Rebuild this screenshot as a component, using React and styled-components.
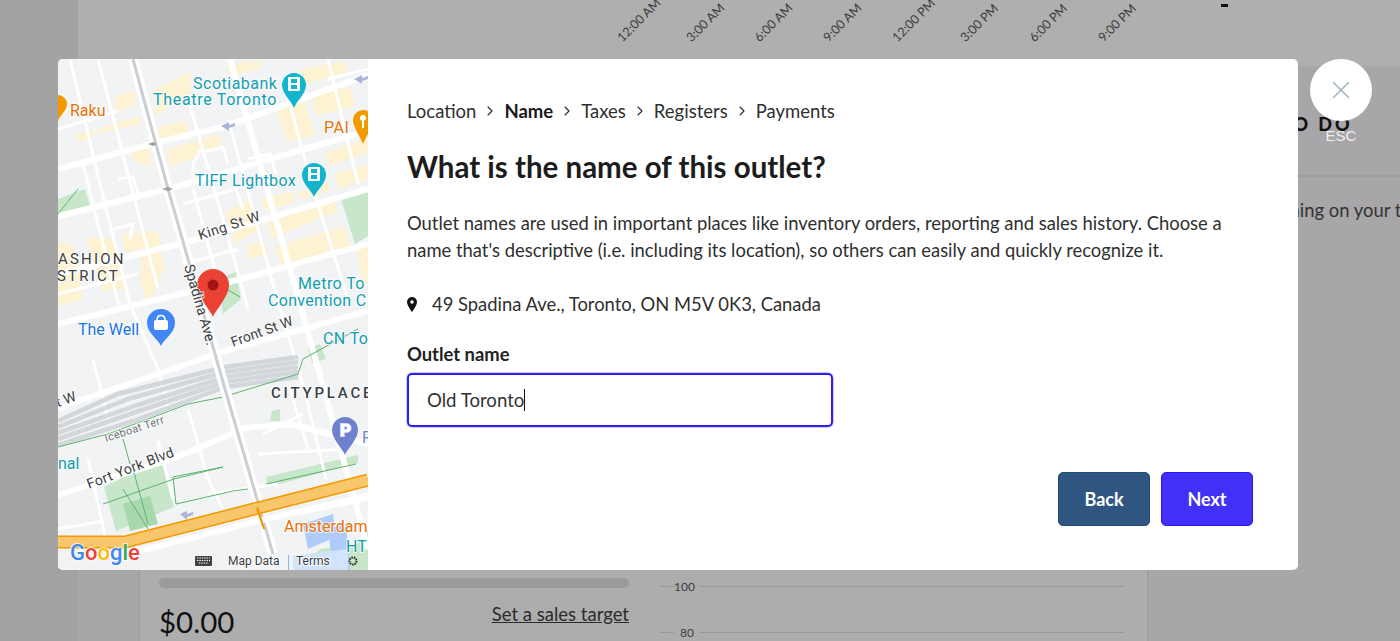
import styled, { createGlobalStyle } from 'styled-components';
import { ChevronRight, X } from 'lucide-react';

const GlobalStyle = createGlobalStyle`
  html, body {
    margin: 0;
    height: 100%;
    overflow: hidden;
    font-family: Lato, "Open Sans", sans-serif;
    color: #2a2a2a;
  }
  #root { height: 100%; }
`;

const Page = styled.div`
  position: relative;
  display: flex;
  width: 1400px;
  height: 641px;
  overflow: hidden;
  background: #a8a6a8;
`;

const Sidebar = styled.div`
  width: 78px;
  flex-shrink: 0;
  background: #a3a3a3;
`;

const Main = styled.div`
  flex: 1;
  display: flex;
  flex-direction: column;
  min-width: 0;
`;

const ChartTop = styled.div`
  height: 66px;
  flex-shrink: 0;
  background: #afafaf;
  display: flex;
  align-items: flex-start;
  padding-left: 546px;
  overflow: hidden;
`;

const Tick = styled.div`
  width: 68.7px;
  height: 44px;
  display: flex;
  align-items: flex-end;
`;

const TickLabel = styled.span`
  display: block;
  font-size: 12.5px;
  line-height: 12px;
  white-space: nowrap;
  color: #3d3d3d;
  transform-origin: 0 100%;
  transform: rotate(-45deg);
`;

const Dash = styled.div`
  width: 7px;
  height: 3px;
  margin: 4px 0 0 47px;
  background: #111;
`;

const Columns = styled.div`
  flex: 1;
  display: flex;
  padding-left: 60px;
  min-height: 0;
`;

const SalesCard = styled.div`
  width: 1011px;
  flex-shrink: 0;
  box-sizing: border-box;
  background: #adadad;
  border-left: 2px solid #a0a0a0;
  border-right: 2px solid #a0a0a0;
  padding: 512px 23px 0 19px;
  display: flex;
  gap: 31px;
`;

const SalesSummary = styled.div`
  width: 470px;
  flex-shrink: 0;
`;

const ProgressTrack = styled.div`
  height: 10px;
  border-radius: 5px;
  background: #9b9b9d;
`;

const SummaryRow = styled.div`
  display: flex;
  justify-content: space-between;
  margin-top: 15px;
`;

const Amount = styled.div`
  font-size: 29.5px;
  line-height: 38px;
  color: #111;
`;

const TargetLink = styled.a`
  font-size: 18.5px;
  line-height: 22px;
  color: #2b2b2b;
  text-decoration: underline;
`;

const AxisGrid = styled.div`
  flex: 1;
  display: flex;
  flex-direction: column;
  gap: 32.5px;
`;

const AxisRow = styled.div`
  display: flex;
  align-items: center;
  height: 12px;
  margin-top: 2px;
  font-size: 12px;
  color: #3d3d3d;
`;

const AxisTick = styled.span`
  width: 14px;
  height: 1px;
  flex-shrink: 0;
  background: #9a9a9a;
`;

const AxisLabel = styled.span`
  width: 20px;
  margin-right: 5px;
  text-align: right;
  flex-shrink: 0;
`;

const AxisLine = styled.span`
  flex: 1;
  height: 1px;
  background: #9a9a9a;
`;

const TodoPanel = styled.div`
  flex: 1;
  min-width: 0;
  overflow: hidden;
`;

const TodoHeader = styled.div`
  height: 111px;
  box-sizing: border-box;
  border-bottom: 2px solid #9f9d9f;
  padding: 47px 0 0 131px;
  font-size: 18px;
  line-height: 22px;
  font-weight: 900;
  letter-spacing: 3px;
  white-space: nowrap;
  color: #111;
`;

const TodoBody = styled.div`
  padding: 22px 0 0 110px;
  font-size: 18.4px;
  line-height: 22px;
  white-space: nowrap;
  color: #333;
`;

const Modal = styled.div`
  position: absolute;
  left: 58px;
  top: 59px;
  width: 1240px;
  height: 511px;
  display: flex;
  background: #fff;
  border-radius: 5px;
  overflow: hidden;
`;

const MapPane = styled.div`
  width: 310px;
  flex-shrink: 0;
  background: #f1f3f4;

  svg { display: block; }
`;

const Content = styled.div`
  flex: 1;
  display: flex;
  flex-direction: column;
  padding: 40px 45px 0 39px;
`;

const Crumbs = styled.nav`
  display: flex;
  align-items: center;
  gap: 6px;
  height: 24px;
  font-size: 18.5px;
  color: #2a2a2a;
`;

const Crumb = styled.span`
  font-weight: ${(p) => (p.$active ? 700 : 400)};
  color: ${(p) => (p.$active ? '#1a1a1a' : '#2f2f2f')};
`;

const Title = styled.h2`
  margin: 25px 0 0;
  font-size: 29.5px;
  line-height: 38px;
  font-weight: 700;
  color: #1c1c1c;
`;

const Description = styled.p`
  margin: 24px 0 0;
  font-size: 18.4px;
  line-height: 27px;
  color: #2f2f2f;
`;

const Address = styled.div`
  display: flex;
  align-items: center;
  gap: 15px;
  margin-top: 28px;
  font-size: 18.4px;
  line-height: 24px;
  color: #2f2f2f;
`;

const Label = styled.label`
  display: block;
  margin-top: 26px;
  font-size: 18.4px;
  line-height: 24px;
  font-weight: 700;
  color: #222;
`;

const FakeInput = styled.div`
  box-sizing: border-box;
  width: 426px;
  height: 54px;
  margin-top: 7px;
  padding: 0 18px;
  display: flex;
  align-items: center;
  border: 2px solid #2b1fe8;
  border-radius: 5px;
  box-shadow: 0 0 2px #5a50f0;
  font-size: 18.6px;
  color: #333;
`;

const Caret = styled.span`
  width: 1px;
  height: 22px;
  background: #111;
`;

const Actions = styled.div`
  display: flex;
  justify-content: flex-end;
  gap: 11px;
  margin-top: 45px;
`;

const Button = styled.button`
  width: 92px;
  height: 54px;
  border: 1px solid ${(p) => (p.$primary ? '#2a17f0' : '#1f4a78')};
  border-radius: 5px;
  background: ${(p) => (p.$primary ? '#4330f6' : '#2f5680')};
  color: #fff;
  font-family: inherit;
  font-size: 18px;
  font-weight: 700;
`;

const CloseWrap = styled.div`
  position: absolute;
  left: 1310px;
  top: 59px;
  width: 62px;
  display: flex;
  flex-direction: column;
  align-items: center;
`;

const CloseCircle = styled.button`
  width: 62px;
  height: 62px;
  padding: 0;
  border: none;
  border-radius: 50%;
  background: #fff;
  color: #9db2c2;
  display: flex;
  align-items: center;
  justify-content: center;
`;

const EscText = styled.span`
  margin-top: 7px;
  font-family: "Liberation Sans", Arial, sans-serif;
  font-size: 15px;
  line-height: 16px;
  color: #efefef;
`;

const MapText = styled.text`
  font-family: Roboto, "Liberation Sans", sans-serif;
  font-size: ${(p) => p.$size || 16}px;
  letter-spacing: ${(p) => p.$spacing || 0}px;
  font-weight: ${(p) => p.$weight || 400};
  fill: ${(p) => p.$color || '#3c4043'};
  paint-order: stroke;
  stroke: rgba(255, 255, 255, 0.75);
  stroke-width: 2px;
`;

const blocks = [
  '97,30 133,13 133,33 97,57', '170,5 203,2 203,10 170,17', '57,37 77,32 77,47 57,52',
  '40,70 82,57 82,65 40,75', '18,75 35,71 36,79 20,83', '100,67 130,62 130,73 100,80',
  '108,90 163,75 163,87 112,108', '72,93 92,88 93,107 77,103', '217,50 247,42 257,77 230,83',
  '253,37 293,28 297,47 258,57', '243,10 287,2 290,13 247,25', '267,93 310,80 310,93 272,107',
  '277,115 310,105 310,120 280,130', '203,140 235,132 237,143 207,152', '240,133 270,123 272,132 243,140',
  '167,153 193,140 203,170 177,185', '210,160 277,142 280,152 213,180', '217,187 287,167 293,190 222,205',
  '188,187 207,182 210,195 192,200', '63,175 100,172 103,187 67,193', '28,178 57,180 67,230 43,232',
  '83,197 103,192 107,207 90,247 82,222', '0,183 17,187 25,240 0,247', '299,190 310,186 310,225 305,225',
];

const parks = [
  '283,140 310,132 310,177 297,185', '0,140 27,130 32,147 0,155', '160,220 178,213 183,240 165,255',
  '46,428 103,400 116,448 58,472', '250,290 262,285 268,300 254,304', '214,352 222,350 222,362 212,362',
  '208,418 300,396 300,404 210,428', '240,511 262,490 300,485 310,470 310,511',
];

const mainRoads = [
  '0,110 93,85 168,67 310,16',
  '0,157 110,130 247,90 310,72',
  '0,215 133,182 310,130',
  '0,265 183,220 310,185',
  '0,349 167,292 310,252',
  '0,436 117,399 187,369 233,365 310,385',
  '172,0 232,210 270,345 310,490',
];

const sideRoads = [
  '12,0 42,125 72,245 100,310 112,355', '40,0 70,115 100,230', '130,40 162,150 190,250',
  '170,60 215,225 246,330 268,420', '225,20 255,130 290,240', '270,0 300,125', '0,70 60,52',
  '0,235 80,215', '25,105 50,205 62,250', '135,130 165,240', '35,300 50,360',
  '130,350 150,420 165,450', '30,400 50,490', '232,330 250,390', '100,382 115,440',
  '200,395 290,390', '150,435 220,425', '60,120 75,118 80,135', '55,170 75,165 72,180',
  '135,125 135,105 142,92 150,92', '150,92 165,88 170,105', '190,100 212,95 218,115', '125,145 178,130 185,150',
  '270,20 310,10', '125,205 180,190', '205,375 245,355', '0,470 45,462', '240,455 310,440',
];

const railLines = [
  '0,362 60,335 167,308 240,298', '0,368 70,340 167,313 240,303', '0,374 80,346 167,318 240,308',
  '0,380 75,354 167,323 240,313', '0,386 75,362 167,328 240,318',
];

const greenLines = [
  '0,388 50,375 130,345 165,338 240,315 245,300', '65,380 72,405', '65,430 90,470',
  '45,445 116,420 165,408', '75,410 90,465', '165,408 115,418 118,445 175,432 190,430', '208,425 298,405',
  '245,300 300,270', '0,155 20,130', '160,225 182,238',
];

function Pin({ x, y, r, tip, color, children }) {
  const k = r * 0.72;
  return (
    <g>
      <path
        d={`M${x} ${y + tip} C${x - 2} ${y + tip - 6} ${x - r} ${y + k} ${x - r} ${y} A${r} ${r} 0 1 1 ${x + r} ${y} C${x + r} ${y + k} ${x + 2} ${y + tip - 6} ${x} ${y + tip}Z`}
        fill={color}
      />
      {children}
    </g>
  );
}

function Reel({ x, y }) {
  return (
    <g>
      <rect x={x - 6} y={y - 7} width="12" height="14" rx="1" fill="#fff" />
      <rect x={x - 3} y={y - 5} width="6" height="4" fill="#12b5cb" />
      <rect x={x - 3} y={y + 1} width="6" height="4" fill="#12b5cb" />
    </g>
  );
}

function MapArt() {
  return (
    <svg width="310" height="511" viewBox="0 0 310 511">
      <rect width="310" height="511" fill="#f1f3f4" />
      {blocks.map((p) => <polygon key={p} points={p} fill="#fdf3d3" />)}
      {parks.map((p) => <polygon key={p} points={p} fill="#c8e6c9" />)}
      <polygon points="65,445 92,437 100,465 72,472" fill="#a8d8ad" />
      <polygon points="245,465 275,455 278,478 250,490" fill="#aecbfa" />
      <polygon points="270,470 288,465 292,511 275,511" fill="#aecbfa" />
      <polygon points="235,497 290,490 290,511 235,511" fill="#d2e3fc" />
      {sideRoads.map((p) => <polyline key={p} points={p} fill="none" stroke="#fff" strokeWidth="3" />)}
      {mainRoads.map((p) => <polyline key={p} points={p} fill="none" stroke="#fff" strokeWidth="6" />)}
      {railLines.map((p) => <polyline key={p} points={p} fill="none" stroke="#d3d6da" strokeWidth="4.5" />)}
      {greenLines.map((p) => <polyline key={p} points={p} fill="none" stroke="#5cb56c" strokeWidth="1" />)}
      <polyline points="75,0 110,130 167,330 215,495" fill="none" stroke="#fff" strokeWidth="10" />
      <polyline points="75,0 110,130 167,330 215,495" fill="none" stroke="#cbced2" strokeWidth="3" />
      <polyline points="0,483 67,483 200,449 310,421" fill="none" stroke="#f29900" strokeWidth="13" />
      <polyline points="0,483 67,483 200,449 310,421" fill="none" stroke="#f9c66c" strokeWidth="10" />
      <polyline points="70,495 200,462 310,437" fill="none" stroke="#fff" strokeWidth="6" />
      <polygon points="198,450 205,470 207,470 200,447" fill="#f29900" />
      <path d="M163 67l8 -4v3l6 -2v3l-6 2v3z M296 20l8 -4v3l6 -2v3l-6 2v3z M122 455l7 -3v3l6 -2v3l-6 2v3z" fill="#a9b6d6" />
      <path d="M90 85l5 -2 4 2 -4 2z M104 130l6 -2 5 2 -5 2z" fill="#9aa0a6" />

      <Pin x={0} y={45} r={9} tip={17} color="#f29900" />
      <Pin x={236} y={26} r={12} tip={23} color="#12b5cb"><Reel x={236} y={25} /></Pin>
      <Pin x={305} y={61} r={10} tip={24} color="#f29900">
        <circle cx="305" cy="59" r="3" fill="#fff" />
        <rect x="304" y="60" width="2" height="9" fill="#fff" />
      </Pin>
      <Pin x={256} y={116} r={12} tip={22} color="#12b5cb"><Reel x={256} y={115} /></Pin>
      <Pin x={103} y={264} r={14} tip={23} color="#4285f4">
        <rect x="96" y="261" width="14" height="10" rx="2" fill="#fff" />
        <path d="M99 261c0 -6 8 -6 8 0" fill="none" stroke="#fff" strokeWidth="1.5" />
      </Pin>
      <Pin x={287} y={371} r={13} tip={25} color="#6f80cf" />
      <MapText x={282} y={377} $size={17} $weight={700} $color="#fff">P</MapText>
      <Pin x={155} y={226} r={16} tip={32} color="#ea4335">
        <circle cx="155" cy="226" r="5.5" fill="#a31515" />
      </Pin>

      <MapText x={135} y={30} $spacing={0.5} $color="#129eaf">Scotiabank</MapText>
      <MapText x={95} y={46} $spacing={0.7} $color="#129eaf">Theatre Toronto</MapText>
      <MapText x={12} y={57} $color="#e8710a">Raku</MapText>
      <MapText x={266} y={74} $spacing={0.5} $color="#e8710a">PAI</MapText>
      <MapText x={137} y={127} $spacing={0.3} $color="#129eaf">TIFF Lightbox</MapText>
      <MapText x={240} y={230} $spacing={0.4} $color="#129eaf">Metro To</MapText>
      <MapText x={210} y={247} $spacing={0.3} $color="#129eaf">Convention C</MapText>
      <MapText x={265} y={285} $spacing={0.4} $color="#129eaf">CN To</MapText>
      <MapText x={20} y={276} $color="#1a73e8">The Well</MapText>
      <MapText x={0} y={410} $color="#129eaf">nal</MapText>
      <MapText x={304} y={384} $color="#6f80cf">R</MapText>
      <MapText x={226} y={473} $color="#e8710a">Amsterdam</MapText>
      <MapText x={288} y={493} $color="#129eaf">HT</MapText>

      <MapText x={0} y={205} $size={15} $spacing={2.2}>ASHION</MapText>
      <MapText x={-1} y={222} $size={15} $spacing={2.2}>STRICT</MapText>
      <MapText x={213} y={339} $size={15} $spacing={2.8} $weight={500}>CITYPLACE</MapText>
      <MapText x={0} y={0} $size={14} $spacing={0.5} transform="translate(142 181) rotate(-18)">King St W</MapText>
      <MapText x={0} y={0} $size={14.5} transform="translate(126 207) rotate(74)">Spadina Ave.</MapText>
      <MapText x={0} y={0} $size={14} transform="translate(175 288) rotate(-20)">Front St W</MapText>
      <MapText x={0} y={0} $size={14} transform="translate(-8 351) rotate(-20)">St W</MapText>
      <MapText x={0} y={0} $size={14} $spacing={0.4} transform="translate(31 430) rotate(-21)">Fort York Blvd</MapText>
      <MapText x={0} y={0} $size={11} $spacing={0.3} $color="#6b7075" transform="translate(48 383) rotate(-18)">Iceboat Terr</MapText>

      <MapText x={12} y={501} $size={22} $weight={500}>
        <tspan fill="#4285f4">G</tspan>
        <tspan fill="#ea4335">o</tspan>
        <tspan fill="#fbbc04">o</tspan>
        <tspan fill="#4285f4">g</tspan>
        <tspan fill="#34a853">l</tspan>
        <tspan fill="#ea4335">e</tspan>
      </MapText>
      <rect x="137" y="497" width="17" height="10" rx="1" fill="#444" />
      <path d="M139 499h13M139 501.5h13M141 504h9" stroke="#fff" strokeWidth="1" strokeDasharray="1.4 1" />
      <MapText x={170} y={506} $size={12}>Map Data</MapText>
      <rect x="230" y="496" width="1" height="15" fill="#8ab4f8" />
      <MapText x={238} y={506} $size={12}>Terms</MapText>
      <circle cx="295" cy="502" r="3.5" fill="none" stroke="#333" strokeWidth="2" strokeDasharray="1.6 0.8" />
    </svg>
  );
}

function PinIcon() {
  return (
    <svg width="10" height="15" viewBox="0 0 10 15">
      <path d="M5 0a5 5 0 0 0-5 5c0 3.400 5 10 5 10s5-6.600 5-10a5 5 0 0 0-5-5zm0 6.800a1.800 1.800 0 1 1 0-3.600 1.800 1.800 0 0 1 0 3.600z" fill="#111" />
    </svg>
  );
}

const ticks = ['12:00 AM', '3:00 AM', '6:00 AM', '9:00 AM', '12:00 PM', '3:00 PM', '6:00 PM', '9:00 PM'];
const steps = [
  { name: 'Location' },
  { name: 'Name', active: true },
  { name: 'Taxes' },
  { name: 'Registers' },
  { name: 'Payments' },
];

export default function App() {
  return (
    <Page>
      <GlobalStyle />
      <Sidebar />
      <Main>
        <ChartTop>
          {ticks.map((t) => (
            <Tick key={t}><TickLabel>{t}</TickLabel></Tick>
          ))}
          <Dash />
        </ChartTop>
        <Columns>
          <SalesCard>
            <SalesSummary>
              <ProgressTrack />
              <SummaryRow>
                <Amount>$0.00</Amount>
                <TargetLink>Set a sales target</TargetLink>
              </SummaryRow>
            </SalesSummary>
            <AxisGrid>
              <AxisRow><AxisTick /><AxisLabel>100</AxisLabel><AxisLine /></AxisRow>
              <AxisRow><AxisTick /><AxisLabel>80</AxisLabel><AxisLine /></AxisRow>
            </AxisGrid>
          </SalesCard>
          <TodoPanel>
            <TodoHeader>TO DO</TodoHeader>
            <TodoBody>Nothing on your to-do list</TodoBody>
          </TodoPanel>
        </Columns>
      </Main>

      <Modal>
        <MapPane><MapArt /></MapPane>
        <Content>
          <Crumbs>
            {steps.flatMap((s, i) => {
              const crumb = <Crumb key={s.name} $active={s.active}>{s.name}</Crumb>;
              return i === 0 ? [crumb] : [<ChevronRight key={i} size={16} strokeWidth={1.6} />, crumb];
            })}
          </Crumbs>
          <Title>What is the name of this outlet?</Title>
          <Description>
            Outlet names are used in important places like inventory orders, reporting and sales history. Choose a
            name that's descriptive (i.e. including its location), so others can easily and quickly recognize it.
          </Description>
          <Address>
            <PinIcon />
            49 Spadina Ave., Toronto, ON M5V 0K3, Canada
          </Address>
          <Label>Outlet name</Label>
          <FakeInput>Old Toronto<Caret /></FakeInput>
          <Actions>
            <Button>Back</Button>
            <Button $primary>Next</Button>
          </Actions>
        </Content>
      </Modal>

      <CloseWrap>
        <CloseCircle><X size={30} strokeWidth={1.2} /></CloseCircle>
        <EscText>ESC</EscText>
      </CloseWrap>
    </Page>
  );
}
